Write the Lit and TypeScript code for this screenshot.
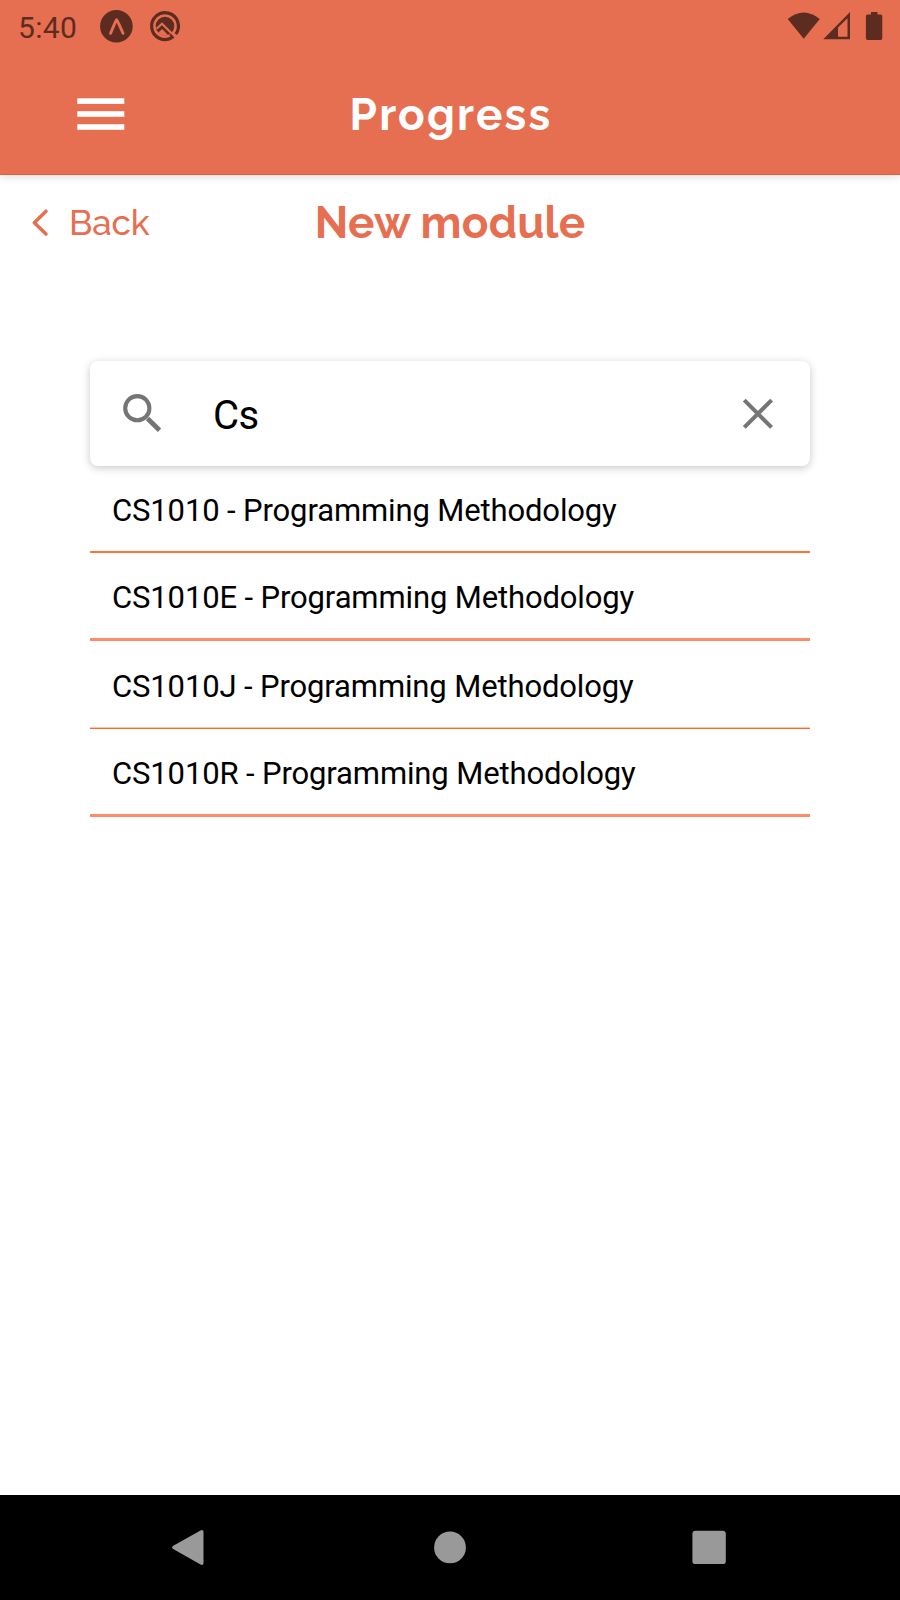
import { LitElement, html, css } from "lit";
import { customElement, state } from "lit/decorators.js";

@customElement("status-bar")
class StatusBar extends LitElement {
  static styles = css`
    :host { display: flex; height: 52px; color: #5c2c20; }
    .time { width: 82px; padding: 10px 0 0 18px; font: 400 30px/35px Roboto, sans-serif; letter-spacing: 0.3px; }
    svg { display: block; fill: currentColor; }
    .left { flex: none; }
    .right { margin-left: auto; }
  `;
  render() {
    return html`
      <div class="time">5:40</div>
      <svg class="left" width="90" height="52" viewBox="100 0 90 52">
        <circle cx="116.4" cy="26.3" r="16.3" />
        <path d="M110.6 33.3Q114.7 23 116.6 19.7Q118.7 23 123 33.3" fill="none" stroke="#e76f51" stroke-width="2.9" stroke-linecap="round" stroke-linejoin="round" />
        <path d="M171.8 37.7A13.4 13.4 0 1 1 175.8 34.1" fill="none" stroke="currentColor" stroke-width="3.2" />
        <circle cx="165" cy="26" r="9.3" />
        <path d="M156.6 28.8L162 23.7L173.5 35.2" fill="none" stroke="#e76f51" stroke-width="2" />
        <path d="M158.4 32.4L162.2 29L168 35Q162 36.5 158.4 32.4Z" fill="#e76f51" />
        <path d="M170 34.3L173.6 38.2" fill="none" stroke="currentColor" stroke-width="2.2" />
      </svg>
      <svg class="right" width="130" height="52" viewBox="770 0 130 52">
        <path d="M787.7 18.9Q803.7 5.9 819.8 18.9L803.7 38.7Z" />
        <path fill-rule="evenodd" d="M823.3 39.2L850 12V39.2ZM838 27.5V36.7H847.5V18.3Z" />
        <path d="M871 12H877.5V14.4H880.6Q882.3 14.4 882.3 16.1V38.2Q882.3 39.9 880.6 39.9H867.6Q865.9 39.9 865.9 38.2V16.1Q865.9 14.4 867.6 14.4H871Z" />
      </svg>
    `;
  }
}

@customElement("nav-bar")
class NavBar extends LitElement {
  static styles = css`
    :host { display: flex; justify-content: center; align-items: center; background: #000; }
    svg { display: block; fill: #999; }
  `;
  render() {
    return html`
      <svg width="260" height="105" viewBox="60 1495 260 105"><path d="M172.8 1546Q171.2 1547.4 172.8 1548.8L200.5 1564.5Q203.5 1565.8 203.5 1563V1532Q203.5 1529.2 200.5 1530.4Z" /></svg>
      <svg width="260" height="105" viewBox="320 1495 260 105"><circle cx="450" cy="1547.4" r="15.9" /></svg>
      <svg width="260" height="105" viewBox="580 1495 260 105"><rect x="692.4" y="1530.7" width="33.4" height="33.4" rx="3.2" /></svg>
    `;
  }
}

@customElement("app-root")
class AppRoot extends LitElement {
  @state() private query = "Cs";
  @state() private modules = ["CS1010", "CS1010E", "CS1010J", "CS1010R"];

  static styles = css`
    :host { display: flex; flex-direction: column; width: 900px; height: 1600px; background: #fff; overflow: hidden; font-family: Roboto, sans-serif; color: #000; }
    svg { display: block; }
    .top { flex: none; height: 174px; background: #e76f51; border-bottom: 1px solid #e65c33; box-shadow: 0 1px 9px rgba(0, 0, 0, 0.16); }
    .bar { display: grid; grid-template-columns: 200px 500px 200px; height: 122px; }
    .title { text-align: center; font-family: Raleway, Lato, sans-serif; font-weight: 700; font-size: 44px; line-height: 52px; white-space: nowrap; }
    .bar .title { color: #fff; padding: 37px 0 0 2px; letter-spacing: 2.2px; }
    .sub { display: grid; grid-template-columns: 200px 500px 200px; height: 186px; color: #e76f51; }
    .sub .title { padding-top: 22px; letter-spacing: 0.2px; }
    .back { display: flex; }
    .back span { font: 500 35px/42px Raleway, Lato, sans-serif; padding-top: 27px; letter-spacing: -0.2px; }
    .search { display: flex; flex: none; box-sizing: border-box; width: 720px; height: 105px; margin: 0 90px; border-radius: 8px; background: #fff; box-shadow: 0 2px 8px rgba(0, 0, 0, 0.22); }
    .query { flex: 1; padding: 31px 0 0 1px; font-size: 40px; line-height: 47px; letter-spacing: -0.5px; }
    .list { margin: 0 90px; }
    .row { height: 85px; padding-left: 22px; border-bottom: 3px solid #ff8a66; font-size: 31px; line-height: 90px; letter-spacing: -0.13px; white-space: nowrap; }
    .row:nth-child(1) { border-bottom: 2px solid #ff7438; }
    .row:nth-child(3) { height: 87px; line-height: 92px; border-bottom: 1px solid #ff6a1c; box-shadow: inset 0 -1px #ffc4a8; }
    nav-bar { flex: none; height: 105px; margin-top: auto; }
  `;

  render() {
    return html`
      <header class="top">
        <status-bar></status-bar>
        <div class="bar">
          <svg width="200" height="122" viewBox="0 52 200 122" fill="#fff">
            <rect x="77.3" y="98.3" width="47" height="5.6" />
            <rect x="77.3" y="111.2" width="47" height="5.6" />
            <rect x="77.3" y="124.2" width="47" height="5.6" />
          </svg>
          <div class="title">Progress</div>
        </div>
      </header>
      <div class="sub">
        <div class="back">
          <svg width="69" height="80" viewBox="0 175 69 80" fill="none" stroke="#e76f51" stroke-width="3.5" stroke-linecap="round" stroke-linejoin="round"><path d="M46 211.2L34.3 222.7L46 234" /></svg>
          <span>Back</span>
        </div>
        <div class="title">New module</div>
      </div>
      <div class="search">
        <svg width="122" height="105" viewBox="90 361 122 105" fill="none" stroke="#757575">
          <circle cx="137.3" cy="408.2" r="12.1" stroke-width="4.1" />
          <path d="M147.5 418.5L159.5 430.2" stroke-width="4.8" />
        </svg>
        <div class="query">${this.query}</div>
        <svg width="110" height="105" viewBox="700 361 110 105" fill="none" stroke="#757575" stroke-width="4">
          <path d="M744.3 400.1L771.6 427.4M771.6 400.1L744.3 427.4" />
        </svg>
      </div>
      <div class="list">
        ${this.modules.map((m) => html`<div class="row">${m} - Programming Methodology</div>`)}
      </div>
      <nav-bar></nav-bar>
    `;
  }
}
